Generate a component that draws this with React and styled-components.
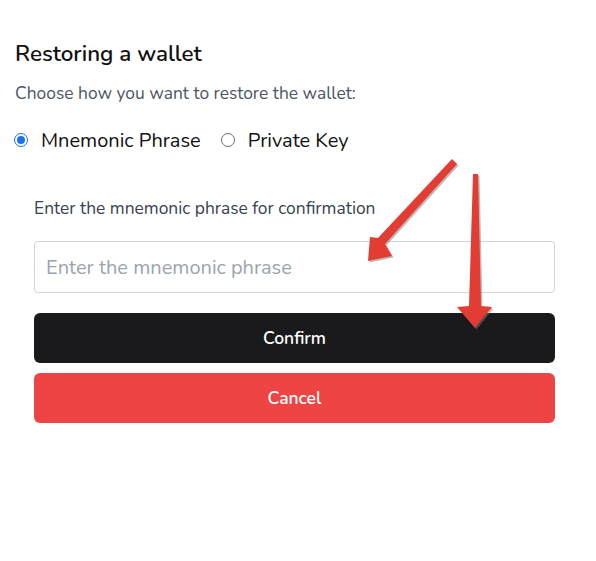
import styled, { createGlobalStyle } from "styled-components"

const GlobalStyle = createGlobalStyle`
  body {
    margin: 0;
    background: #ffffff;
    font-family: "Nunito", "Lato", "Noto Sans", sans-serif;
  }
`;

const Page = styled.div`
  position: relative;
  width: 596px;
  height: 561px;
  padding: 40px 15px 0 14px;
  box-sizing: border-box;
`;

const Title = styled.h1`
  margin: 0 0 0 1px;
  font-size: 22.4px;
  line-height: 28px;
  font-weight: 600;
  color: #111111;
`;

const Subtitle = styled.p`
  margin: 13px 0 0 1px;
  font-size: 17.4px;
  line-height: 24px;
  color: #4b5563;
`;

const RadioRow = styled.div`
  display: flex;
  align-items: center;
  gap: 20px;
  margin-top: 23px;
  height: 24px;
`;

const RadioOption = styled.label`
  display: flex;
  align-items: center;
  gap: 13px;
  font-size: 20px;
  color: #111111;
  cursor: pointer;
`;

const Dot = styled.span`
  width: 14px;
  height: 14px;
  border-radius: 50%;
  box-sizing: border-box;
  border: ${(p) => (p.$checked ? "1.5px solid #1a73e8" : "1.5px solid #6b6b6b")};
  display: flex;
  align-items: center;
  justify-content: center;
  &::after {
    content: "";
    width: 8px;
    height: 8px;
    border-radius: 50%;
    background: ${(p) => (p.$checked ? "#1a73e8" : "transparent")};
  }
`;

const Form = styled.div`
  width: 521px;
  margin: 44px 0 0 20px;
  display: flex;
  flex-direction: column;
`;

const Label = styled.div`
  font-size: 17.4px;
  line-height: 24px;
  color: #374151;
`;

const Input = styled.input`
  margin-top: 21px;
  height: 52px;
  box-sizing: border-box;
  border: 1px solid #d4d4d8;
  border-radius: 4px;
  padding: 0 11px;
  font-family: inherit;
  font-size: 20px;
  color: #111;
  outline: none;
  &::placeholder {
    color: #9ca3af;
  }
`;

const Button = styled.button`
  margin-top: ${(p) => p.$gap}px;
  height: 50px;
  border: none;
  border-radius: 6px;
  background: ${(p) => p.$bg};
  color: #ffffff;
  font-family: inherit;
  font-size: 17.5px;
  font-weight: 600;
  cursor: pointer;
`;

const Overlay = styled.svg`
  position: absolute;
  left: 0;
  top: 0;
  pointer-events: none;
`;

const App = () => {
  return (
    <Page>
      <GlobalStyle />
      <Title>Restoring a wallet</Title>
      <Subtitle>Choose how you want to restore the wallet:</Subtitle>
      <RadioRow>
        <RadioOption>
          <Dot $checked />
          Mnemonic Phrase
        </RadioOption>
        <RadioOption>
          <Dot />
          Private Key
        </RadioOption>
      </RadioRow>
      <Form>
        <Label>Enter the mnemonic phrase for confirmation</Label>
        <Input placeholder="Enter the mnemonic phrase" />
        <Button $bg="#1a1a1c" $gap={20}>Confirm</Button>
        <Button $bg="#ef4444" $gap={10}>Cancel</Button>
      </Form>

      {/* annotation arrows drawn over the form */}
      <Overlay width="596" height="561" viewBox="0 0 596 561">
        <g fill="#7a7a7a" opacity="0.5" transform="translate(1.5 1.5)">
          <polygon points="452,159 457,164 385,244 392,256 368,261 370,237 378,238" />
          <polygon points="473,174 478,174 481,306 492,307 475,328 457,307 469,306" />
        </g>
        <g fill="#e23c33">
          <polygon points="452,159 457,164 385,244 392,256 368,261 370,237 378,238" />
          <polygon points="473,174 478,174 481,306 492,307 475,328 457,307 469,306" />
        </g>
      </Overlay>
    </Page>
  )
}

export default App
